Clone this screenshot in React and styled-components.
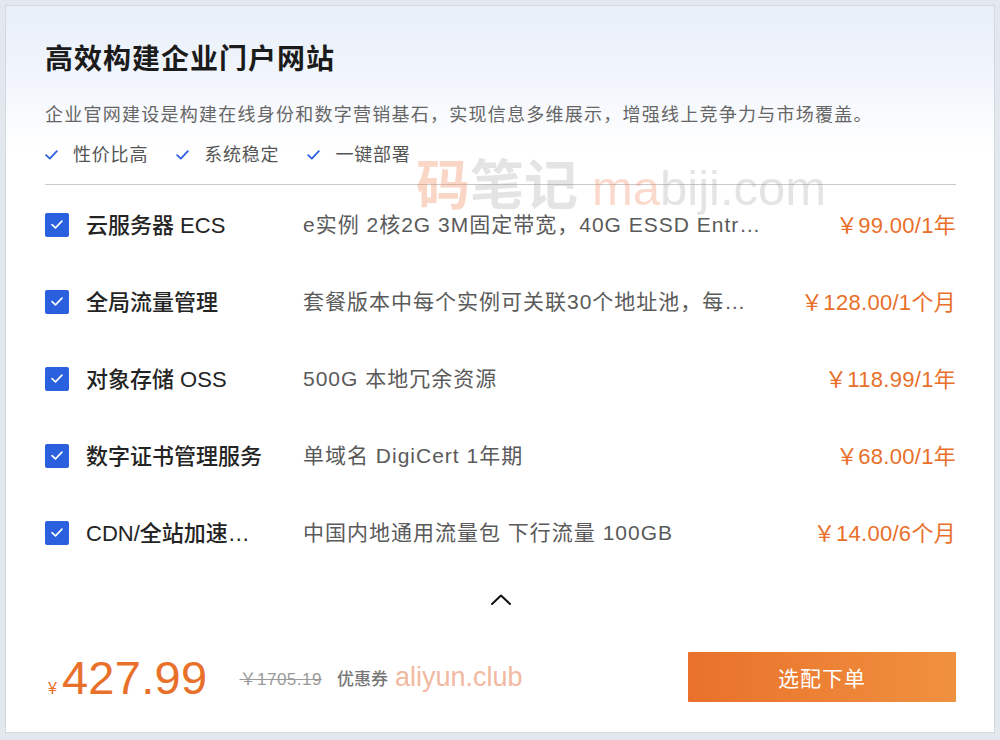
import React from "react";
import styled, { createGlobalStyle } from "styled-components";

const Global = createGlobalStyle`
  html, body { margin: 0; padding: 0; background: #e3e7ee; }
  body {
    font-family: "Helvetica Neue", "Liberation Sans", "Noto Sans CJK SC", sans-serif;
    -webkit-font-smoothing: antialiased;
  }
`;

const Frame = styled.div`
  width: 1000px;
  height: 740px;
  padding: 5px 5px 0 5px;
  box-sizing: border-box;
`;

const Card = styled.div`
  position: relative;
  width: 990px;
  height: 728px;
  box-sizing: border-box;
  border: 1px solid #d3d8e1;
  background: linear-gradient(180deg, #e8eff9 0%, #f1f5fc 70px, #fbfcfe 120px, #ffffff 150px);
  padding: 36px 38px 0 39px;
  display: flex;
  flex-direction: column;
  overflow: hidden;
`;

const Title = styled.h1`
  margin: 0;
  font-size: 28px;
  line-height: 36px;
  font-weight: 700;
  color: #1b1b1b;
  letter-spacing: 1px;
`;

const Desc = styled.p`
  margin: 24px 0 0;
  font-size: 18px;
  line-height: 26px;
  color: #666;
  letter-spacing: 1.25px;
`;

const Features = styled.ul`
  list-style: none;
  margin: 15px 0 0;
  padding: 0;
  display: flex;
  gap: 28px;
  height: 24px;
  align-items: center;
`;

const Feature = styled.li`
  display: flex;
  align-items: center;
  gap: 15px;
  font-size: 18px;
  letter-spacing: 0.8px;
  color: #555;
  line-height: 24px;
`;

const Divider = styled.hr`
  margin: 17px 0 0;
  border: 0;
  border-top: 1px solid #c9c9c9;
`;

const Rows = styled.div`
  margin-top: 1px;
  display: flex;
  flex-direction: column;
`;

const Row = styled.div`
  height: 77px;
  display: flex;
  align-items: center;
`;

const Box = styled.span`
  width: 24px;
  height: 24px;
  border-radius: 2px;
  background: #2a5fdd;
  display: flex;
  align-items: center;
  justify-content: center;
  flex-shrink: 0;
`;

const Cell = styled.span`
  white-space: nowrap;
  overflow: hidden;
  text-overflow: ellipsis;
  padding-bottom: 3px;
`;

const Name = styled(Cell)`
  margin-left: 17px;
  width: 180px;
  font-size: 22px;
  font-weight: 500;
  color: #242424;
  flex-shrink: 0;
`;

const Spec = styled(Cell)`
  margin-left: 37px;
  width: 460px;
  font-size: 21px;
  letter-spacing: 1px;
  color: #5a5a5a;
  flex-shrink: 0;
`;

const Price = styled(Cell)`
  flex: 1;
  text-align: right;
  font-size: 22px;
  letter-spacing: 0.3px;
  color: #e8702a;
  overflow: visible;
`;

const Toggle = styled.div`
  height: 56px;
  display: flex;
  align-items: center;
  justify-content: center;
`;

const Footer = styled.div`
  height: 100px;
  display: flex;
  align-items: center;
`;

const Total = styled.div`
  display: flex;
  align-items: baseline;
  color: #e8702a;
  margin-left: 3px;
`;

const Yen = styled.span`
  font-size: 16px;
  margin-right: 5px;
`;

const Big = styled.span`
  font-size: 47px;
  line-height: 1;
  letter-spacing: 0.3px;
`;

const Old = styled.span`
  margin-left: 32px;
  font-size: 17px;
  letter-spacing: 0.5px;
  color: #9a9a9a;
  text-decoration: line-through;
`;

const Coupon = styled.span`
  margin-left: 15px;
  font-size: 17px;
  color: #777;
  font-weight: 500;
`;

const CouponCode = styled.span`
  margin-left: 7px;
  font-size: 27px;
  color: #f2b9a1;
`;

const Spacer = styled.div`
  flex: 1;
`;

const Button = styled.button`
  width: 268px;
  height: 50px;
  border: 0;
  border-radius: 1px;
  background: linear-gradient(90deg, #e9712b 0%, #f0913f 100%);
  color: #fff;
  font-family: inherit;
  font-size: 21px;
  letter-spacing: 1px;
  cursor: pointer;
`;

const Watermark = styled.div`
  position: absolute;
  left: 410px;
  top: 136px;
  display: flex;
  align-items: baseline;
  pointer-events: none;
  white-space: nowrap;
`;

const WmCn = styled.span`
  font-size: 54px;
  font-weight: 700;
  color: ${(p) => (p.$accent ? "rgba(242, 140, 100, 0.36)" : "rgba(150, 150, 150, 0.26)")};
`;

const WmEn = styled.span`
  font-size: 49px;
  color: ${(p) => (p.$accent ? "rgba(242, 140, 100, 0.32)" : "rgba(150, 150, 150, 0.26)")};
`;

const Check = ({ color = "#2a5fdd", size = 13 }) => (
  <svg width={size} height={size * 0.75} viewBox="0 0 13 10" fill="none">
    <path d="M1 5.2 L4.8 8.8 L12 1.2" stroke={color} strokeWidth="1.8" strokeLinecap="round" strokeLinejoin="round" />
  </svg>
);

const items = [
  { name: "云服务器 ECS", spec: "e实例 2核2G 3M固定带宽，40G ESSD Entry云盘", price: "￥99.00/1年" },
  { name: "全局流量管理", spec: "套餐版本中每个实例可关联30个地址池，每个地址池可添加地址", price: "￥128.00/1个月" },
  { name: "对象存储 OSS", spec: "500G 本地冗余资源", price: "￥118.99/1年" },
  { name: "数字证书管理服务", spec: "单域名 DigiCert 1年期", price: "￥68.00/1年" },
  { name: "CDN/全站加速资源包", spec: "中国内地通用流量包 下行流量 100GB", price: "￥14.00/6个月" },
];

export default function App() {
  return (
    <Frame>
      <Global />
      <Card>
        <Title>高效构建企业门户网站</Title>
        <Desc>企业官网建设是构建在线身份和数字营销基石，实现信息多维展示，增强线上竞争力与市场覆盖。</Desc>
        <Features>
          {["性价比高", "系统稳定", "一键部署"].map((f) => (
            <Feature key={f}>
              <Check />
              {f}
            </Feature>
          ))}
        </Features>
        <Divider />
        <Rows>
          {items.map((it) => (
            <Row key={it.name}>
              <Box>
                <Check color="#fff" size={12} />
              </Box>
              <Name>{it.name}</Name>
              <Spec>{it.spec}</Spec>
              <Price>{it.price}</Price>
            </Row>
          ))}
        </Rows>
        <Toggle>
          <svg width="22" height="13" viewBox="0 0 22 13" fill="none">
            <path d="M2 11 L11 2.5 L20 11" stroke="#111" strokeWidth="2" strokeLinecap="round" strokeLinejoin="round" />
          </svg>
        </Toggle>
        <Footer>
          <Total>
            <Yen>¥</Yen>
            <Big>427.99</Big>
          </Total>
          <Old>￥1705.19</Old>
          <Coupon>优惠券</Coupon>
          <CouponCode>aliyun.club</CouponCode>
          <Spacer />
          <Button>选配下单</Button>
        </Footer>
        <Watermark>
          <WmCn $accent>码</WmCn>
          <WmCn>笔记</WmCn>
          <WmEn $accent style={{ marginLeft: 14 }}>ma</WmEn>
          <WmEn>biji.com</WmEn>
        </Watermark>
      </Card>
    </Frame>
  );
}
